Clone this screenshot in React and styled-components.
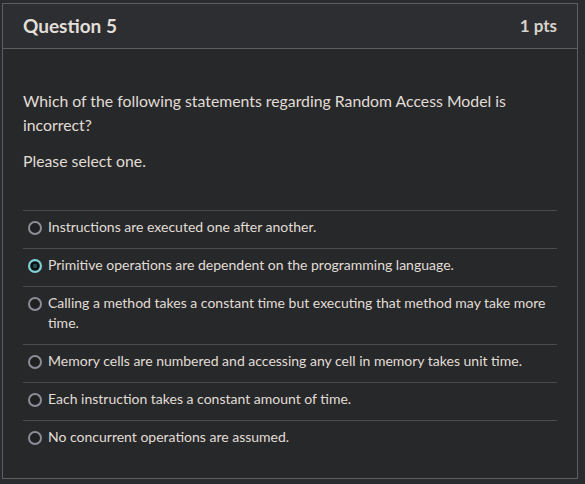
import React from "react";
import styled, { createGlobalStyle } from "styled-components";

const Global = createGlobalStyle`
  html, body { margin: 0; padding: 0; background: #2a2b2e; }
  body { font-family: Lato, "Noto Sans", sans-serif; color: #dddad3; }
`;

const Card = styled.section`
  box-sizing: border-box;
  width: 576px;
  height: 476px;
  margin: 3px 0 0 2px;
  border: 1px solid #5c5e62;
  background: #27282a;
  display: flex;
  flex-direction: column;
`;

const Header = styled.header`
  height: 44px;
  display: flex;
  align-items: center;
  justify-content: space-between;
  padding: 0 20px 2px 20px;
  box-sizing: border-box;
  height: 45px;
  background: #2d2e31;
  border-bottom: 1px solid #5c5e62;
`;

const Title = styled.h2`
  margin: 0;
  font-size: 19px;
  font-weight: 700;
  color: #e2dfd8;
`;

const Points = styled.span`
  font-size: 17px;
  font-weight: 700;
  color: #d6d3cc;
`;

const Body = styled.div`
  padding: 40px 20px 0 20px;
`;

const Para = styled.p`
  margin: 0 0 12px 0;
  font-size: 15.8px;
  line-height: 24px;
  color: #e0ddd6;
`;

const Answers = styled.ul`
  list-style: none;
  margin: 37px 0 0 0;
  padding: 0;
`;

const Answer = styled.li`
  display: flex;
  align-items: flex-start;
  gap: 6px;
  border-top: 1px solid #4a4b4f;
  padding: 6px 0 11px 5px;
  font-size: 14px;
  line-height: 20px;
  color: #e0ddd6;
`;

const RadioWrap = styled.span`
  flex: 0 0 auto;
  width: 14px;
  height: 14px;
  margin-top: 4px;
  display: flex;
`;

function Radio({ checked }) {
  return (
    <RadioWrap>
      <svg width="14" height="14" viewBox="0 0 14 14">
        {checked ? (
          <>
            <circle cx="7" cy="7" r="7" fill="#7fd3d8" />
            <circle cx="7" cy="7" r="4.8" fill="#0e1012" />
            <circle cx="7" cy="7" r="2.2" fill="#244f53" />
          </>
        ) : (
          <circle cx="7" cy="7" r="6" fill="#1f2022" stroke="#8d8c97" strokeWidth="2" />
        )}
      </svg>
    </RadioWrap>
  );
}

const options = [
  "Instructions are executed one after another.",
  "Primitive operations are dependent on the programming language.",
  "Calling a method takes a constant time but executing that method may take more time.",
  "Memory cells are numbered and accessing any cell in memory takes unit time.",
  "Each instruction takes a constant amount of time.",
  "No concurrent operations are assumed.",
];

export default function App() {
  return (
    <>
      <Global />
      <Card>
        <Header>
          <Title>Question 5</Title>
          <Points>1 pts</Points>
        </Header>
        <Body>
          <Para>Which of the following statements regarding Random Access Model is incorrect?</Para>
          <Para>Please select one.</Para>
          <Answers>
            {options.map((o, i) => (
              <Answer key={i}>
                <Radio checked={i === 1} />
                <span>{o}</span>
              </Answer>
            ))}
          </Answers>
        </Body>
      </Card>
    </>
  );
}
